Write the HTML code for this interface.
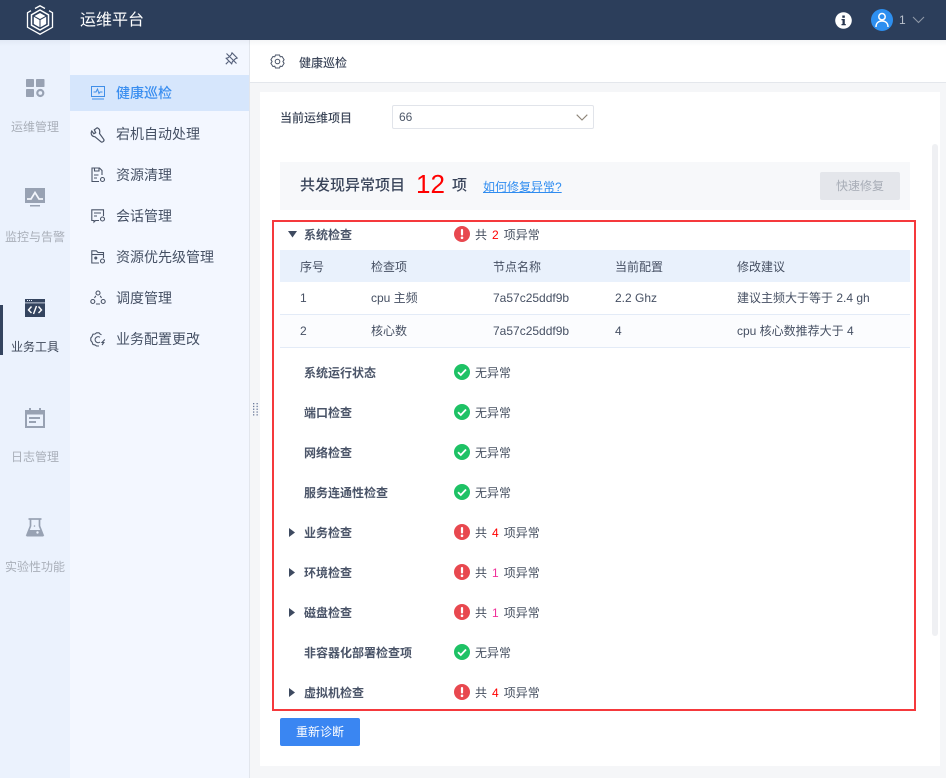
<!DOCTYPE html>
<html lang="zh"><head><meta charset="utf-8"><title>健康巡检</title>
<style>
*{box-sizing:border-box}
html,body{margin:0;padding:0;width:946px;height:778px;overflow:hidden;background:#f5f6f8}
body{position:relative;font-family:"Liberation Sans","Noto Sans CJK SC",sans-serif;font-size:12px;color:#3c4658}
.a{position:absolute;white-space:nowrap}
svg{position:absolute;overflow:visible}
.rail{left:0;width:70px;text-align:center;color:#a9afb9;line-height:18px}
.nav{left:116px;font-size:14px;line-height:20px;color:#455064}
.n{left:304px;font-weight:700;line-height:18px;color:#4a5468}
.st{left:475px;line-height:18px;color:#454f60}
.st span{margin:0 5px}
.th{line-height:18px;color:#465063}
.td{line-height:18px;color:#465063}
</style></head><body>

<!-- top bar -->
<div class="a" style="left:0;top:0;width:946px;height:40px;background:#2c3e5b"></div>
<svg style="left:26px;top:5px" width="28" height="30" viewBox="0 0 28 30" fill="none">
<path d="M9 3.500 14 .8l5 2.700M23 5.700l3.500 2v14.600L14 29.200 1.500 22.300V7.700L5 5.700" stroke="#fff" stroke-width="1.300"/>
<path d="M14 5 22.500 9.800v10.400L14 25l-8.500-4.800V9.800z" stroke="#fff" stroke-width="1.500"/>
<path d="M7.800 11.800 13.500 15v7.200l-5.700-3.200zM20.200 11.800 14.500 15v7.200l5.700-3.200zM14 8l5.500 3-5.500 3-5.500-3z" fill="#fff"/>
</svg>
<div class="a" style="left:80px;top:10px;font-size:16px;line-height:22px;color:#fff">运维平台</div>
<svg style="left:835px;top:12px" width="17" height="17" viewBox="0 0 17 17"><circle cx="8.500" cy="8.500" r="8.300" fill="#fff"/><rect x="7.300" y="3.500" width="2.500" height="2.300" fill="#27364f"/><path d="M6.500 7h3.300v5h1v1.300H6.500V12h1V8.300h-1z" fill="#27364f"/></svg>
<svg style="left:871px;top:9px" width="22" height="22" viewBox="0 0 22 22" fill="none"><circle cx="11" cy="11" r="11" fill="#2d8ff0"/><circle cx="11" cy="7.700" r="3.200" stroke="#fff" stroke-width="1.500"/><path d="M5 18c0-4 2.500-6 6-6s6 2 6 6" stroke="#fff" stroke-width="1.500"/></svg>
<div class="a" style="left:899px;top:11px;line-height:18px;color:#b9c0cb">1</div>
<svg style="left:912px;top:16px" width="13" height="8" viewBox="0 0 13 8" fill="none"><path d="M1 1l5.500 5.500L12 1" stroke="#8f98a7" stroke-width="1.100"/></svg>

<!-- left rail and nav -->
<div class="a" style="left:0;top:40px;width:70px;height:738px;background:#ebf2fd"></div>
<div class="a" style="left:70px;top:40px;width:180px;height:738px;background:#f3f7ff;border-right:1px solid #e2e6ed"></div>
<div class="a" style="left:0;top:305px;width:3px;height:50px;background:#34445f"></div>

<svg style="left:25px;top:77px" width="21" height="21" viewBox="0 0 21 21" fill="#98a2b3"><rect x="1" y="2" width="8" height="8" rx=".8"/><rect x="11" y="2" width="8.500" height="8" rx=".8"/><rect x="1" y="12" width="8" height="8" rx=".8"/><circle cx="15.300" cy="16" r="3" fill="none" stroke="#98a2b3" stroke-width="2.200"/></svg>
<div class="a rail" style="top:118px">运维管理</div>
<svg style="left:25px;top:188px" width="20" height="20" viewBox="0 0 20 20"><rect x="0" y="0" width="20" height="15" fill="#98a2b3"/><path d="M2 11h4l4-6.500L14 11h4" fill="none" stroke="#f3f6fc" stroke-width="1.700"/><rect x="5" y="17" width="10" height="1.500" fill="#98a2b3"/></svg>
<div class="a rail" style="top:228px">监控与告警</div>
<svg style="left:25px;top:299px" width="20" height="18" viewBox="0 0 20 18"><rect width="20" height="18" fill="#34445f"/><rect x="0" y="3.500" width="20" height=".8" fill="#ebf2fd"/><path d="M2 1.500h1M4 1.500h1M6 1.500h1" stroke="#ebf2fd"/><path d="M6.500 7.500 3.500 11l3 3M13.500 7.500l3 3.500-3 3M11.500 7l-3 8" fill="none" stroke="#fff" stroke-width="1.400"/></svg>
<div class="a rail" style="top:338px;color:#3d4759">业务工具</div>
<svg style="left:25px;top:408px" width="20" height="20" viewBox="0 0 20 20"><path d="M4 0h2v2h8V0h2v2h4v18H0V2h4z" fill="#98a2b3"/><rect x="2" y="6.500" width="16" height="11.500" fill="#ebf2fd"/><rect x="4" y="9" width="11" height="2" fill="#98a2b3"/><rect x="4" y="13" width="7" height="2" fill="#98a2b3"/></svg>
<div class="a rail" style="top:448px">日志管理</div>
<svg style="left:26px;top:518px" width="18" height="19" viewBox="0 0 18 19" fill="none"><path d="M2.500 1h13" stroke="#98a2b3" stroke-width="1.700"/><path d="M4.500 1v7L1 17h16l-3.500-9V1" stroke="#98a2b3" stroke-width="1.700"/><path d="M3 12h12l2.500 6.500H.5z" fill="#98a2b3"/><circle cx="11.500" cy="14.500" r="1.200" fill="#ebf2fd"/><circle cx="8.500" cy="8" r=".8" fill="#98a2b3"/></svg>
<div class="a rail" style="top:558px">实验性功能</div>

<svg style="left:225px;top:52px" width="13" height="13" viewBox="0 0 13 13" fill="none" stroke="#55607a" stroke-width="1.100"><path d="M7 .8 12.200 6 10.400 6.700 7.400 9.700 6.700 11.800 1.200 6.300 3.300 5.600 6.300 2.600z"/><path d="M3.500 9.500.8 12.200M1.500 1.500l10 10"/></svg>

<div class="a" style="left:70px;top:75px;width:179px;height:36px;background:#d6e6fc"></div>
<svg style="left:91px;top:86px" width="14" height="14" viewBox="0 0 14 14" fill="none" stroke="#3f8ee8" stroke-width="1"><rect x=".5" y=".5" width="13" height="10"/><path d="M2.500 6h2.500L6.500 3l1.500 4.500 1-1.500h2.500M1 13h12"/></svg>
<div class="a nav" style="top:83px;color:#3a8ef0;font-weight:500">健康巡检</div>

<svg style="left:90px;top:127px" width="16" height="16" viewBox="0 0 16 16" fill="none" stroke="#4b5568" stroke-width="1.200"><path d="M7.200 .8 4.300 2.800l1.400 2.900-1.900 1L1.800 4C.4 6.800 1.600 9.500 5 9.800L11 14.800c1.200 1 3.700-.9 2.800-2.400L9.500 6.500C10.200 3.600 9.500 1.500 7.200.8z"/></svg>
<div class="a nav" style="top:124px">宕机自动处理</div>

<svg style="left:91px;top:167px" width="15" height="16" viewBox="0 0 15 16" fill="none" stroke="#4b5568" stroke-width="1.100"><path d="M8 14.500H1V1h7.500L11 3.500V8"/><path d="M3.500 1v3H8V1M3 8h4.500M3 11h3"/><circle cx="11.500" cy="12.500" r="2"/></svg>
<div class="a nav" style="top:165px">资源清理</div>

<svg style="left:91px;top:209px" width="15" height="14" viewBox="0 0 15 14" fill="none" stroke="#4b5568" stroke-width="1.100"><path d="M8 11.500H4.500L3 13v-1.500H.8V.8h11.700V7"/><path d="M3 4h7M3 7h3"/><circle cx="11.500" cy="10" r="2"/></svg>
<div class="a nav" style="top:206px">会话管理</div>

<svg style="left:91px;top:250px" width="15" height="14" viewBox="0 0 15 14" fill="none" stroke="#4b5568" stroke-width="1.100"><path d="M8 13H.8V.8h4.500L7 2.500h5.500V8"/><path d="M.8 4.500h11.700"/><circle cx="4.800" cy="8" r="1" fill="#4b5568"/><circle cx="11.500" cy="11" r="2"/></svg>
<div class="a nav" style="top:247px">资源优先级管理</div>

<svg style="left:90px;top:290px" width="16" height="15" viewBox="0 0 16 15" fill="none" stroke="#4b5568" stroke-width="1.100"><circle cx="8" cy="3" r="2"/><circle cx="2.800" cy="11.500" r="2"/><circle cx="13.200" cy="11.500" r="2"/><path d="M5.800 5.800 4.500 8M10.200 5.800l1.300 2.200M6 14h4"/></svg>
<div class="a nav" style="top:288px">调度管理</div>

<svg style="left:90px;top:332px" width="16" height="15" viewBox="0 0 16 15" fill="none" stroke="#4b5568" stroke-width="1.100"><path d="M11.500 2.800 10 2 9 .8H6.500L5 2 3 2.200 2 4.500.8 6v2.500L2 10l1 2.500 2 .4L6.500 14H9"/><path d="M10 5.300A3 3 0 1 0 10 10"/><path d="M14.800 7.500l-2.800 3h1.800L12 13"/></svg>
<div class="a nav" style="top:329px">业务配置更改</div>

<svg style="left:253px;top:403px" width="6" height="13" viewBox="0 0 6 13" fill="#6b7a9a"><rect x="0" y="0" width="1.300" height="1.300"/><rect x="3.500" y="0" width="1.300" height="1.300"/><rect x="0" y="2.800" width="1.300" height="1.300"/><rect x="3.500" y="2.800" width="1.300" height="1.300"/><rect x="0" y="5.600" width="1.300" height="1.300"/><rect x="3.500" y="5.600" width="1.300" height="1.300"/><rect x="0" y="8.400" width="1.300" height="1.300"/><rect x="3.500" y="8.400" width="1.300" height="1.300"/><rect x="0" y="11.200" width="1.300" height="1.300"/><rect x="3.500" y="11.200" width="1.300" height="1.300"/></svg>

<!-- page title strip -->
<div class="a" style="left:250px;top:40px;width:696px;height:43px;background:#fff;border-bottom:1px solid #e4e7ec"></div>
<div class="a" style="left:0;top:40px;width:946px;height:6px;background:linear-gradient(rgba(44,62,91,.05),rgba(44,62,91,0))"></div>
<svg style="left:270px;top:54px" width="15" height="15" viewBox="0 0 15 15" fill="none" stroke="#4b5568" stroke-width="1"><path d="M5.500 1h4l.7 1.800 1.900-.3 2 3.200-1.200 1.800 1.200 1.800-2 3.200-1.900-.3-.7 1.800h-4l-.7-1.800-1.900.3-2-3.200 1.200-1.800L.9 5.700l2-3.200 1.900.3z"/><circle cx="7.500" cy="7.500" r="2.300"/></svg>
<div class="a" style="left:299px;top:54px;line-height:18px;color:#3f495c;font-weight:500">健康巡检</div>

<!-- content card -->
<div class="a" style="left:260px;top:92px;width:680px;height:674px;background:#fff"></div>
<div class="a" style="left:932px;top:144px;width:6px;height:492px;background:#eff0f3;border-radius:3px"></div>

<div class="a" style="left:280px;top:109px;line-height:18px;color:#3c4658;font-weight:500">当前运维项目</div>
<div class="a" style="left:392px;top:105px;width:202px;height:24px;background:#fff;border:1px solid #e1e4ea;border-radius:2px"></div>
<div class="a" style="left:399px;top:108px;line-height:18px;color:#4f596a">66</div>
<svg style="left:576px;top:114px" width="12" height="7" viewBox="0 0 12 7" fill="none"><path d="M.7.7 6 6 11.300.7" stroke="#8d8478" stroke-width="1.100"/></svg>

<div class="a" style="left:280px;top:162px;width:630px;height:48px;background:#f7f8fa"></div>
<div class="a" style="left:300px;top:175px;font-size:15px;line-height:21px;color:#39445a;font-weight:500">共发现异常项目</div>
<div class="a" style="left:416px;top:168px;font-size:26px;line-height:32px;color:#f00">12</div>
<div class="a" style="left:452px;top:175px;font-size:15px;line-height:21px;color:#39445a;font-weight:500">项</div>
<div class="a" style="left:483px;top:178px;line-height:18px;color:#2f8cf0;text-decoration:underline">如何修复异常?</div>
<div class="a" style="left:820px;top:172px;width:80px;height:28px;background:#e4e6eb;border-radius:2px;text-align:center;line-height:28px;color:#a8adb7">快速修复</div>

<!-- red outline -->
<div class="a" style="left:272px;top:220px;width:644px;height:491px;border:2px solid #f5393c"></div>

<!-- rows -->
<svg style="left:288px;top:231px" width="9" height="7" viewBox="0 0 9 7"><path d="M0 0h9L4.500 6.500z" fill="#3e4a60"/></svg>
<div class="a n" style="top:226px">系统检查</div>
<svg style="left:454px;top:226px" width="16" height="16" viewBox="0 0 16 16"><circle cx="8" cy="8" r="8" fill="#e8484f"/><rect x="6.900" y="3" width="2.200" height="6.500" rx="1" fill="#fff"/><circle cx="8" cy="11.800" r="1.300" fill="#fff"/></svg>
<div class="a st" style="top:226px">共<span style="color:#f00">2</span>项异常</div>

<div class="a" style="left:280px;top:250px;width:630px;height:32px;background:#e9f1fc"></div>
<div class="a th" style="left:300px;top:258px">序号</div><div class="a th" style="left:371px;top:258px">检查项</div><div class="a th" style="left:493px;top:258px">节点名称</div><div class="a th" style="left:615px;top:258px">当前配置</div><div class="a th" style="left:737px;top:258px">修改建议</div>

<div class="a" style="left:280px;top:314px;width:630px;height:1px;background:#e3ebf7"></div>
<div class="a td" style="left:300px;top:289px">1</div><div class="a td" style="left:371px;top:289px">cpu 主频</div><div class="a td" style="left:493px;top:289px">7a57c25ddf9b</div><div class="a td" style="left:615px;top:289px">2.2 Ghz</div><div class="a td" style="left:737px;top:289px">建议主频大于等于 2.4 gh</div>

<div class="a" style="left:280px;top:315px;width:630px;height:32px;background:#fbfcfe"></div>
<div class="a" style="left:280px;top:347px;width:630px;height:1px;background:#e3ebf7"></div>
<div class="a td" style="left:300px;top:322px">2</div><div class="a td" style="left:371px;top:322px">核心数</div><div class="a td" style="left:493px;top:322px">7a57c25ddf9b</div><div class="a td" style="left:615px;top:322px">4</div><div class="a td" style="left:737px;top:322px">cpu 核心数推荐大于 4</div>

<div class="a n" style="top:364px">系统运行状态</div>
<svg style="left:454px;top:364px" width="16" height="16" viewBox="0 0 16 16"><circle cx="8" cy="8" r="8" fill="#1ec265"/><path d="M4 8.200l2.800 2.800L12 5.500" fill="none" stroke="#fff" stroke-width="1.800"/></svg>
<div class="a st" style="top:364px">无异常</div>

<div class="a n" style="top:404px">端口检查</div>
<svg style="left:454px;top:404px" width="16" height="16" viewBox="0 0 16 16"><circle cx="8" cy="8" r="8" fill="#1ec265"/><path d="M4 8.200l2.800 2.800L12 5.500" fill="none" stroke="#fff" stroke-width="1.800"/></svg>
<div class="a st" style="top:404px">无异常</div>

<div class="a n" style="top:444px">网络检查</div>
<svg style="left:454px;top:444px" width="16" height="16" viewBox="0 0 16 16"><circle cx="8" cy="8" r="8" fill="#1ec265"/><path d="M4 8.200l2.800 2.800L12 5.500" fill="none" stroke="#fff" stroke-width="1.800"/></svg>
<div class="a st" style="top:444px">无异常</div>

<div class="a n" style="top:484px">服务连通性检查</div>
<svg style="left:454px;top:484px" width="16" height="16" viewBox="0 0 16 16"><circle cx="8" cy="8" r="8" fill="#1ec265"/><path d="M4 8.200l2.800 2.800L12 5.500" fill="none" stroke="#fff" stroke-width="1.800"/></svg>
<div class="a st" style="top:484px">无异常</div>

<svg style="left:289px;top:528px" width="6" height="9" viewBox="0 0 6 9"><path d="M0 0v9l6-4.500z" fill="#3e4a60"/></svg>
<div class="a n" style="top:524px">业务检查</div>
<svg style="left:454px;top:524px" width="16" height="16" viewBox="0 0 16 16"><circle cx="8" cy="8" r="8" fill="#e8484f"/><rect x="6.900" y="3" width="2.200" height="6.500" rx="1" fill="#fff"/><circle cx="8" cy="11.800" r="1.300" fill="#fff"/></svg>
<div class="a st" style="top:524px">共<span style="color:#f00">4</span>项异常</div>

<svg style="left:289px;top:568px" width="6" height="9" viewBox="0 0 6 9"><path d="M0 0v9l6-4.500z" fill="#3e4a60"/></svg>
<div class="a n" style="top:564px">环境检查</div>
<svg style="left:454px;top:564px" width="16" height="16" viewBox="0 0 16 16"><circle cx="8" cy="8" r="8" fill="#e8484f"/><rect x="6.900" y="3" width="2.200" height="6.500" rx="1" fill="#fff"/><circle cx="8" cy="11.800" r="1.300" fill="#fff"/></svg>
<div class="a st" style="top:564px">共<span style="color:#f0309a">1</span>项异常</div>

<svg style="left:289px;top:608px" width="6" height="9" viewBox="0 0 6 9"><path d="M0 0v9l6-4.500z" fill="#3e4a60"/></svg>
<div class="a n" style="top:604px">磁盘检查</div>
<svg style="left:454px;top:604px" width="16" height="16" viewBox="0 0 16 16"><circle cx="8" cy="8" r="8" fill="#e8484f"/><rect x="6.900" y="3" width="2.200" height="6.500" rx="1" fill="#fff"/><circle cx="8" cy="11.800" r="1.300" fill="#fff"/></svg>
<div class="a st" style="top:604px">共<span style="color:#f0309a">1</span>项异常</div>

<div class="a n" style="top:644px">非容器化部署检查项</div>
<svg style="left:454px;top:644px" width="16" height="16" viewBox="0 0 16 16"><circle cx="8" cy="8" r="8" fill="#1ec265"/><path d="M4 8.200l2.800 2.800L12 5.500" fill="none" stroke="#fff" stroke-width="1.800"/></svg>
<div class="a st" style="top:644px">无异常</div>

<svg style="left:289px;top:688px" width="6" height="9" viewBox="0 0 6 9"><path d="M0 0v9l6-4.500z" fill="#3e4a60"/></svg>
<div class="a n" style="top:684px">虚拟机检查</div>
<svg style="left:454px;top:684px" width="16" height="16" viewBox="0 0 16 16"><circle cx="8" cy="8" r="8" fill="#e8484f"/><rect x="6.900" y="3" width="2.200" height="6.500" rx="1" fill="#fff"/><circle cx="8" cy="11.800" r="1.300" fill="#fff"/></svg>
<div class="a st" style="top:684px">共<span style="color:#f00">4</span>项异常</div>

<div class="a" style="left:280px;top:718px;width:80px;height:28px;background:#3a86f2;border-radius:2px;text-align:center;line-height:28px;color:#fff">重新诊断</div>

</body></html>
